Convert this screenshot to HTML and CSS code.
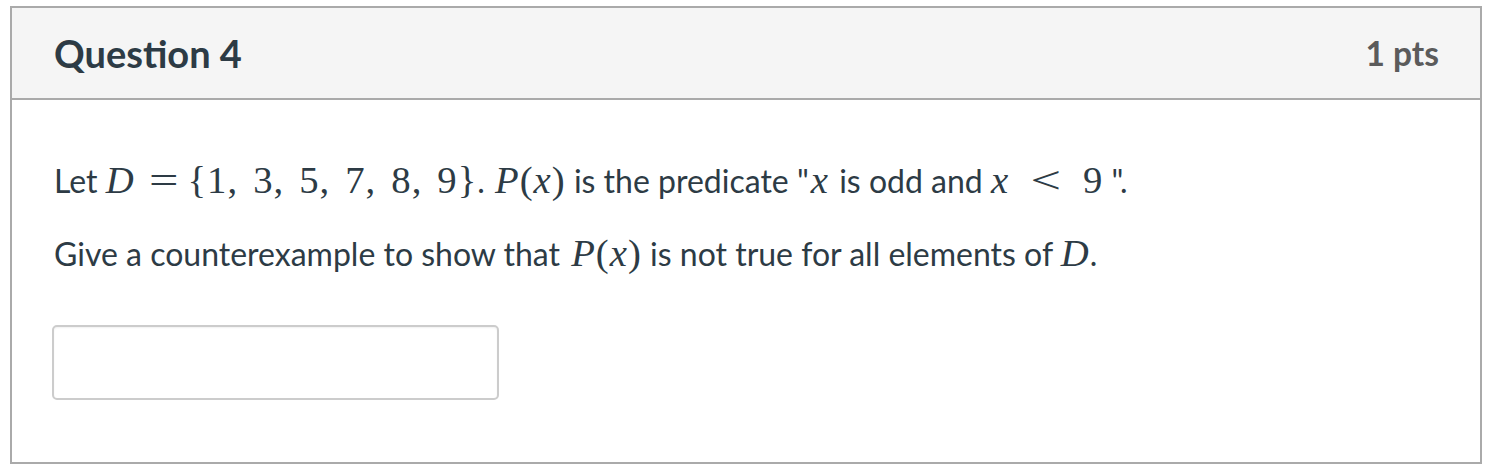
FILE: index.html
```html
<!DOCTYPE html>
<html lang="en">
<head>
<meta charset="utf-8">
<title>Question 4</title>
<link rel="stylesheet" href="styles.css">
</head>
<body>
<div class="question">
  <div class="question-header">
    <h2 class="question-title">Question 4</h2>
    <span class="question-points">1 pts</span>
  </div>
  <div class="question-body">
    <p class="question-text">Let <span class="math"><i>D</i><span class="rel rel-eq">=</span>{1,<span class="sp"></span>3,<span class="sp"></span>5,<span class="sp"></span>7,<span class="sp"></span>8,<span class="sp"></span>9}</span>. <span class="math gap"><i>P</i>(<i>x</i>)</span> is the predicate "<span class="math var-x"><i>x</i></span> is odd and <span class="math"><i>x</i><span class="rel rel-lt">&lt;</span>9</span> ".</p>
    <p class="question-text">Give a counterexample to show that <span class="math gap-sm"><i>P</i>(<i>x</i>)</span> is not true for all elements of <span class="math"><i>D</i></span>.</p>
    <input class="answer-input" type="text" aria-label="Answer">
  </div>
</div>
</body>
</html>
```
FILE: styles.css
```css
html, body {
  margin: 0;
  padding: 0;
  background: #ffffff;
}
body {
  padding: 6px 16px 0 10px;
  font-family: Lato, "Liberation Sans", sans-serif;
  color: #2d3b45;
}
.question {
  width: 1472px;
  height: 458px;
  box-sizing: border-box;
  border: 2px solid #aaaaaa;
  background: #ffffff;
}
.question-header {
  height: 92px;
  box-sizing: border-box;
  background: #f5f5f5;
  border-bottom: 2px solid #aaaaaa;
  display: flex;
  align-items: center;
  justify-content: space-between;
  padding: 0 41px 0 42px;
}
.question-title {
  margin: 0;
  font-size: 38px;
  font-weight: 700;
  color: #2d3b45;
}
.question-points {
  font-size: 33.5px;
  font-weight: 700;
  color: #5b5b5b;
}
.question-body {
  padding: 55px 42px 0 42px;
}
.question-text {
  margin: 0 0 22px 0;
  font-size: 32px;
  line-height: 50px;
}
.math {
  font-family: "Liberation Serif", "DejaVu Serif", serif;
  font-size: 1.21em;
  letter-spacing: 1px;
}
.math i {
  font-style: italic;
}
.gap {
  margin-left: 2px;
}
.gap-sm {
  margin-left: 3px;
}
.var-x {
  margin: 0 2px 0 2px;
}
.rel-eq {
  display: inline-block;
  margin: 0 12px 0 18px;
  transform: scaleX(1.35);
}
.rel-lt {
  display: inline-block;
  margin: 0 25px 0 26px;
  transform: scaleX(1.4);
}
.sp {
  display: inline-block;
  width: 15px;
}
.answer-input {
  display: block;
  margin: 46px 0 0 -2px;
  width: 447px;
  height: 75px;
  box-sizing: border-box;
  border: 2px solid #cccccc;
  border-radius: 5px;
  box-shadow: inset 0 1px 2px rgba(0,0,0,0.06);
  background: #fff;
}
```
